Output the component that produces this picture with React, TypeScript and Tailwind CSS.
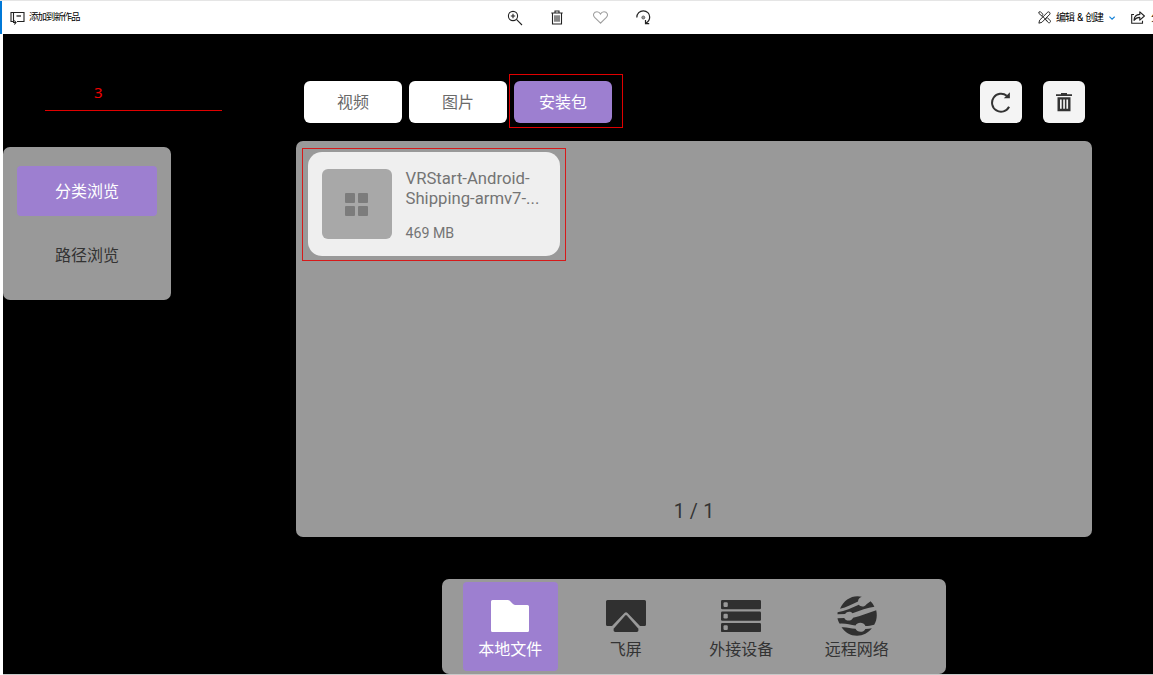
import React from "react";

const ink = "#303030";

function PhotoAddIcon() {
  return (
    <svg width="16" height="14" viewBox="0 0 16 14" fill="none" stroke="#222" strokeWidth="1.1">
      <path d="M3 10.500H1V1.500H3.500" />
      <path d="M3.500 8V1.500H14V10.500H7" />
      <path d="M6.500 5H11" strokeWidth="1.300" />
      <path d="M3.500 8V11.500H5.500M4.300 9.500l1.700 2-1.700 2" />
    </svg>
  );
}

function ZoomIcon() {
  return (
    <svg width="16" height="16" viewBox="0 0 16 16" fill="none" stroke="#222" strokeWidth="1.1">
      <circle cx="6" cy="6" r="4.6" />
      <path d="M9.4 9.4 15 15M3.8 6h4.4M6 3.8v4.4" />
    </svg>
  );
}

function BinIcon() {
  return (
    <svg width="12" height="15" viewBox="0 0 12 15" fill="none" stroke="#222" strokeWidth="1.1">
      <path d="M0.3 3H11.7M4 3V1H8V3M1.5 3V14H10.5V3" />
      <path d="M4 5.2V11.8M6 5.2V11.8M8 5.2V11.8" />
    </svg>
  );
}

function HeartIcon() {
  return (
    <svg width="15" height="13" viewBox="0 0 15 13" fill="none" stroke="#a0a0a0" strokeWidth="1.100">
      <path d="M7.500 12.200 1.600 6.400C-.6 4 .8.7 4 .7c1.600 0 2.800.9 3.500 2.300C8.200 1.600 9.400.7 11 .7c3.200 0 4.600 3.300 2.400 5.700z" />
    </svg>
  );
}

function RotateIcon() {
  return (
    <svg width="16" height="15" viewBox="0 0 16 15" fill="none" stroke="#222" strokeWidth="1.200">
      <path d="M.8 7.500C.8 3.600 3.700.8 7.300.8c3.700 0 6.400 2.900 6.400 6.200 0 2.700-1.400 4.900-4 6.200" />
      <path d="M9.500 10V13.700H13.200" />
      <circle cx="7.300" cy="7.500" r="1.500" fill="#999" stroke="#555" strokeWidth="0.800" />
    </svg>
  );
}

function EditIcon() {
  return (
    <svg width="15" height="15" viewBox="0 0 15 15" fill="none" stroke="#222" strokeWidth="1.100">
      <path d="M1 1.300 2.700.8 5.800 4 4.200 5.600 1 2.800zM9 8.800l1.500-1.300 3.700 3.800c.6 1-.7 2.700-2 2.200L8.500 10" />
      <path d="M1 14l.9-3.500L11.300 1.200c1-.8 3.200.9 2.400 2.400L4.500 13z" />
      <path d="M4 4.800l6.500 6.700" />
    </svg>
  );
}

function ShareIcon() {
  return (
    <svg width="14" height="13" viewBox="0 0 14 13" fill="none" stroke="#222" strokeWidth="1.100">
      <path d="M3 3.500H.7V12.300H11.500V9.800" />
      <path d="M3 9.300C3.200 5.500 5.500 3.500 8.800 3.400V.8l4.600 4.200-4.600 4.200V6.400C6 6.400 4.500 7.300 3 9.300z" strokeLinejoin="round" />
    </svg>
  );
}

function RefreshIcon() {
  return (
    <svg width="20" height="21" viewBox="0 0 20 21" fill="none">
      <path d="M18.100 14.800A9 9 0 1 1 15.800 3.800" stroke="#333" strokeWidth="2" />
      <path d="M18.900.3V6.300H12.800z" fill="#333" />
    </svg>
  );
}

function TrashIcon() {
  return (
    <svg width="16" height="19" viewBox="0 0 16 19" fill="#333">
      <path d="M5 0h6v1.200h5v1.800H0V1.200h5z" />
      <path fillRule="evenodd" d="M1.500 4.300h13V18.300h-13zM4 6.500v9.300h1.700v-9.300zM7.200 6.500v9.300h1.700v-9.300zM10.400 6.500v9.300h1.700v-9.300z" />
    </svg>
  );
}

function FolderIcon() {
  return (
    <svg width="38" height="32" viewBox="0 0 38 32" fill="#fff">
      <path d="M1.500 0H16.500Q18 0 19 1L22 4Q23 5 24.500 5H36.500A1.500 1.500 0 0 1 38 6.500V30.500A1.500 1.500 0 0 1 36.500 32H1.500A1.500 1.500 0 0 1 0 30.500V1.500A1.500 1.500 0 0 1 1.500 0z" />
    </svg>
  );
}

function CastIcon() {
  return (
    <svg width="40" height="32" viewBox="0 0 40 32" fill={ink}>
      <path d="M1.500 0h37A1.500 1.500 0 0 1 40 1.500V24.500A1.500 1.500 0 0 1 38.500 26H34L21.500 13Q20 11.700 18.500 13L6 26H1.500A1.500 1.500 0 0 1 0 24.500V1.500A1.500 1.500 0 0 1 1.500 0z" />
      <path d="M19.200 15.500q.8-.8 1.600 0L32.200 28.500Q33 31.500 31 32H9Q7 31.500 7.800 28.500z" />
    </svg>
  );
}

function ServerIcon() {
  return (
    <svg width="40" height="32" viewBox="0 0 40 32">
      {[0, 11.5, 23].map((y) => (
        <g key={y}>
          <rect x="0" y={y} width="40" height="9.200" rx="1.200" fill={ink} />
          <rect x="2.500" y={y + 2.2} width="4.300" height="4.800" rx="1.200" fill="#999" />
        </g>
      ))}
    </svg>
  );
}

function NetworkIcon() {
  return (
    <svg width="40" height="40" viewBox="0 0 40 40" fill={ink}>
      <path d="M3 12.700C6.500 5 13 .3 20.500.3c1.500 0 3 .2 4.300.5-2.300.8-3.600 2.300-3.800 4.600C15.500 8 9.500 11.300 3 12.700z" />
      <path d="M.6 16.200C8 15.200 15 12 21.800 8.800c1.800 2.200 5.600 2.500 7.700-.6L33.600 5.300c1.600 1.500 2.800 3.300 3.800 5.400C30.500 11.500 23 14.700 15.500 17.200c-2-2-5.500-2-7.400.8L.5 18.300z" />
      <path d="M.5 22.200 7.300 22c1.600 3.400 7 3.700 8.800-.3C24 20.300 31.500 16.500 39.200 14.300c1.200 5.300.5 10.200-2 14.400-3 .8-6 1.300-8.800 1.300-1.600-4-8-4.300-9.900-.4C13.500 29 8.500 27.200 2.800 27.700 1.600 26 .8 24.200.5 22.200z" />
      <path d="M4.500 31.200c4.800-.4 9.200 1 14 1.600 1.700 3.800 8 4 9.900.1 2.300 0 4.400-.2 6.500-.6C31.500 36.800 26 39.700 20 39.700c-6.500 0-12-3.500-15.500-8.500z" />
    </svg>
  );
}

const tabs = ["视频", "图片", "安装包"];
const dock = [
  { label: "本地文件", icon: <FolderIcon />, active: true },
  { label: "飞屏", icon: <CastIcon />, active: false },
  { label: "外接设备", icon: <ServerIcon />, active: false },
  { label: "远程网络", icon: <NetworkIcon />, active: false },
];

function Toolbar() {
  return (
    <header className="flex h-[34px] items-center border-t border-[#e5e5e5] bg-white text-[10px] tracking-[-0.9px] whitespace-nowrap text-black">
      <div className="h-full w-0.5 bg-[#0078d7]" />
      <div className="flex w-[505px] items-center gap-[3px] pl-2">
        <PhotoAddIcon />
        <span className="text-[9.500px] tracking-[-1.100px]">添加到新作品</span>
      </div>
      <div className="flex w-[531px] items-center">
        <div className="flex w-[44px]"><ZoomIcon /></div>
        <div className="flex w-[42px]"><BinIcon /></div>
        <div className="flex w-[43px]"><HeartIcon /></div>
        <RotateIcon />
      </div>
      <div className="flex w-[77px] items-center gap-1">
        <EditIcon />
        <span className="ml-px tracking-[-1.200px] [word-spacing:2px]">编辑 &amp; 创建</span>
        <svg className="ml-0.5" width="7" height="4" viewBox="0 0 7 4" fill="none" stroke="#1683d8" strokeWidth="1.300">
          <path d="M.5.5 3.500 3.300 6.500.5" />
        </svg>
      </div>
      <div className="flex min-w-0 flex-1 items-center gap-1.5 overflow-hidden pl-4">
        <div className="shrink-0"><ShareIcon /></div>
        <span>分享</span>
      </div>
    </header>
  );
}

export default function App() {
  return (
    <div className="flex h-[675px] w-[1153px] flex-col overflow-hidden bg-white font-['Roboto','Noto_Sans_CJK_SC',sans-serif]">
      <Toolbar />
      <div className="ml-[3px] flex h-[640px] bg-black">
        <aside className="flex w-[293px] flex-col">
          <div className="ml-[42px] flex h-[77px] w-[177px] items-end border-b border-[#e00000] pb-2 pl-[49px] text-[15px] leading-5 text-[#f00000]">
            <span className="font-['Noto_Sans']">3</span>
          </div>
          <nav className="mt-9 flex h-[153px] w-[168px] flex-col gap-3.5 rounded-[7px] bg-[#999] px-3.5 pt-[19px] text-center text-base">
            <div className="h-[50px] w-[140px] rounded bg-[#9d7fd0] leading-[52px] text-white">分类浏览</div>
            <div className="h-[50px] w-[140px] leading-[52px] text-[#333]">路径浏览</div>
          </nav>
        </aside>
        <main className="flex w-[796px] flex-col pt-[47px]">
          <div className="flex h-[42px] items-stretch justify-between pr-[7px] pl-[7.500px]">
            <div className="flex gap-[7px]">
              {tabs.map((t, i) => (
                <div key={t} className="relative">
                  <div className={i === 2 ? "h-[42px] w-[98px] rounded-md bg-[#9d7fd0] pl-px text-center text-base leading-[43px] text-white" : "h-[42px] w-[98px] rounded-md bg-white pl-px text-center text-base leading-[43px] text-[#6a6a6a]"}>{t}</div>
                  {i === 2 && <div className="absolute -top-[7px] -left-[4.500px] h-[54px] w-[114px] border border-[#e00000]" />}
                </div>
              ))}
            </div>
            <div className="flex gap-[21px]">
              <div className="flex w-[42px] items-center justify-center rounded-md bg-[#f4f4f4]"><RefreshIcon /></div>
              <div className="flex w-[42px] items-center justify-center rounded-md bg-[#f4f4f4]"><TrashIcon /></div>
            </div>
          </div>
          <section className="mt-[18px] flex h-[396px] flex-col justify-between rounded-[7px] bg-[#999] pt-[11px] pb-[13px] pl-[11.500px]">
            <div className="relative flex h-[104px] w-[252px] gap-3.5 rounded-[14px] bg-[#efefef] pt-[17px] pl-3.5">
              <div className="flex size-[70px] items-center justify-center rounded-md bg-[#a8a8a8]">
                <div className="grid grid-cols-2 gap-[3px]">
                  {[0, 1, 2, 3].map((n) => (
                    <div key={n} className="size-2.5 rounded-[1px] bg-[#7c7c7c]" />
                  ))}
                </div>
              </div>
              <div className="text-[#747474]">
                <div className="text-[16.700px] leading-5">VRStart-Android-<br />Shipping-armv7-...</div>
                <div className="mt-3.5 text-[14.200px] leading-5">469 MB</div>
              </div>
              <div className="absolute -top-1 -left-[5.500px] h-[113px] w-[264px] border border-[#d61a1a]" />
            </div>
            <div className="pr-[11.500px] text-center text-[19.500px] leading-6 tracking-[0.200px] text-[#333]">1 / 1</div>
          </section>
          <nav className="mt-[42px] ml-[146px] flex h-[95px] w-[504px] gap-[21px] rounded-[7px] bg-[#999] pt-[3px] pl-[21px]">
            {dock.map((d) => (
              <div key={d.label} className={d.active ? "flex h-[89px] w-[94.500px] flex-col items-center rounded bg-[#9d7fd0] pt-[14px] text-white" : "flex h-[89px] w-[94.500px] flex-col items-center pt-[14px] text-[#333]"}>
                <div className="flex h-10 items-center">{d.icon}</div>
                <div className="pt-px text-base leading-[25px]">{d.label}</div>
              </div>
            ))}
          </nav>
        </main>
      </div>
      <div className="ml-[3px] h-px bg-[#c8c8c8]" />
    </div>
  );
}
